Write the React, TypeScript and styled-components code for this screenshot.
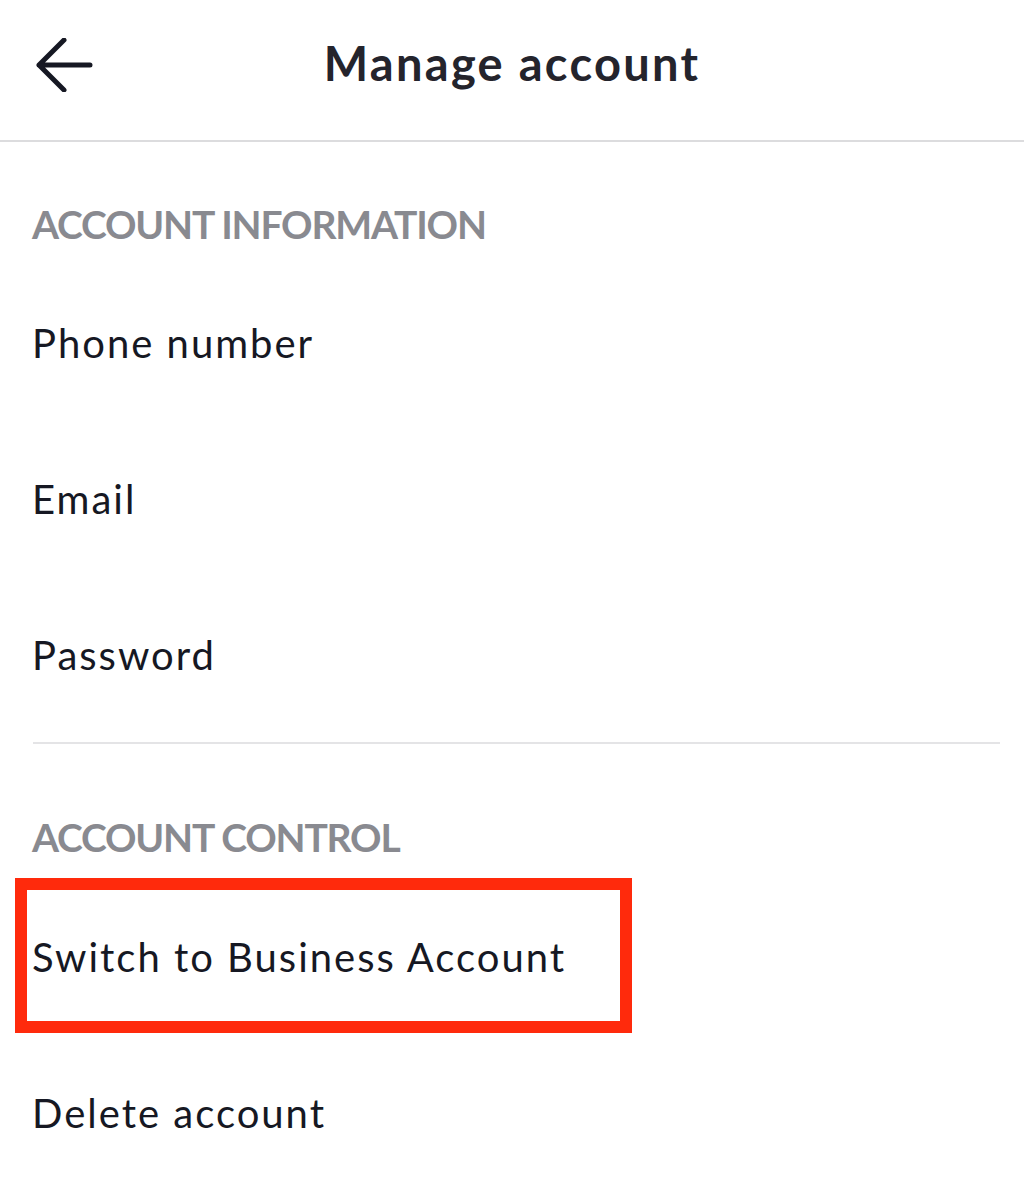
import React from "react";
import styled, { createGlobalStyle } from "styled-components";

const Global = createGlobalStyle`
  html, body { margin: 0; padding: 0; background: #ffffff; }
  body { font-family: Lato, "Noto Sans", sans-serif; -webkit-font-smoothing: antialiased; }
`;

const Page = styled.div`
  width: 1024px;
  min-height: 1204px;
  background: #ffffff;
  display: flex;
  flex-direction: column;
`;

const Header = styled.header`
  height: 130px;
  padding-bottom: 10px;
  border-bottom: 2px solid #dcdcde;
  display: grid;
  grid-template-columns: 120px 1fr 120px;
  align-items: center;
`;

const BackButton = styled.button`
  border: none;
  background: none;
  padding: 0 0 0 36px;
  margin: 0;
  height: 60px;
  display: flex;
  align-items: center;
  cursor: pointer;
`;

const Title = styled.h1`
  margin: 0;
  text-align: center;
  font-size: 47px;
  font-weight: 700;
  color: #24242c;
  line-height: 1;
  letter-spacing: 2.3px;
  padding-bottom: 4px;
`;

const SectionTitle = styled.h2<{ $top: number; $bottom: number }>`
  margin: 0;
  padding: ${(p) => p.$top}px 32px ${(p) => p.$bottom}px;
  line-height: 48px;
  font-size: 39px;
  font-weight: 700;
  color: #898a90;
  letter-spacing: -1.2px;
`;

const Row = styled.div`
  position: relative;
  height: 156px;
  display: flex;
  align-items: center;
  padding: 0 32px;
  font-size: 40px;
  color: #161823;
  letter-spacing: 2px;
`;

const Highlight = styled.div`
  position: absolute;
  left: 15px;
  top: -1px;
  width: 617px;
  height: 155px;
  box-sizing: border-box;
  border: 12px solid #ff2a0c;
  pointer-events: none;
`;

const Divider = styled.hr`
  margin: 9px 24px 0 33px;
  border: none;
  height: 2px;
  background: #e4e4e6;
`;

const BackArrow = () => (
  <svg width="58" height="54" viewBox="0 0 58 54" fill="none">
    <path
      d="M28 2 L3 27 L28 52 M3 27 H54"
      stroke="#161823"
      strokeWidth="5"
      strokeLinecap="round"
      strokeLinejoin="round"
    />
  </svg>
);

export default function App() {
  return (
    <Page>
      <Global />
      <Header>
        <BackButton aria-label="Back">
          <BackArrow />
        </BackButton>
        <Title>Manage account</Title>
        <div />
      </Header>
      <SectionTitle $top={58} $bottom={17}>ACCOUNT INFORMATION</SectionTitle>
      <Row>Phone number</Row>
      <Row>Email</Row>
      <Row>Password</Row>
      <Divider />
      <SectionTitle $top={69} $bottom={18}>ACCOUNT CONTROL</SectionTitle>
      <Row>
        Switch to Business Account
        <Highlight />
      </Row>
      <Row>Delete account</Row>
    </Page>
  );
}
